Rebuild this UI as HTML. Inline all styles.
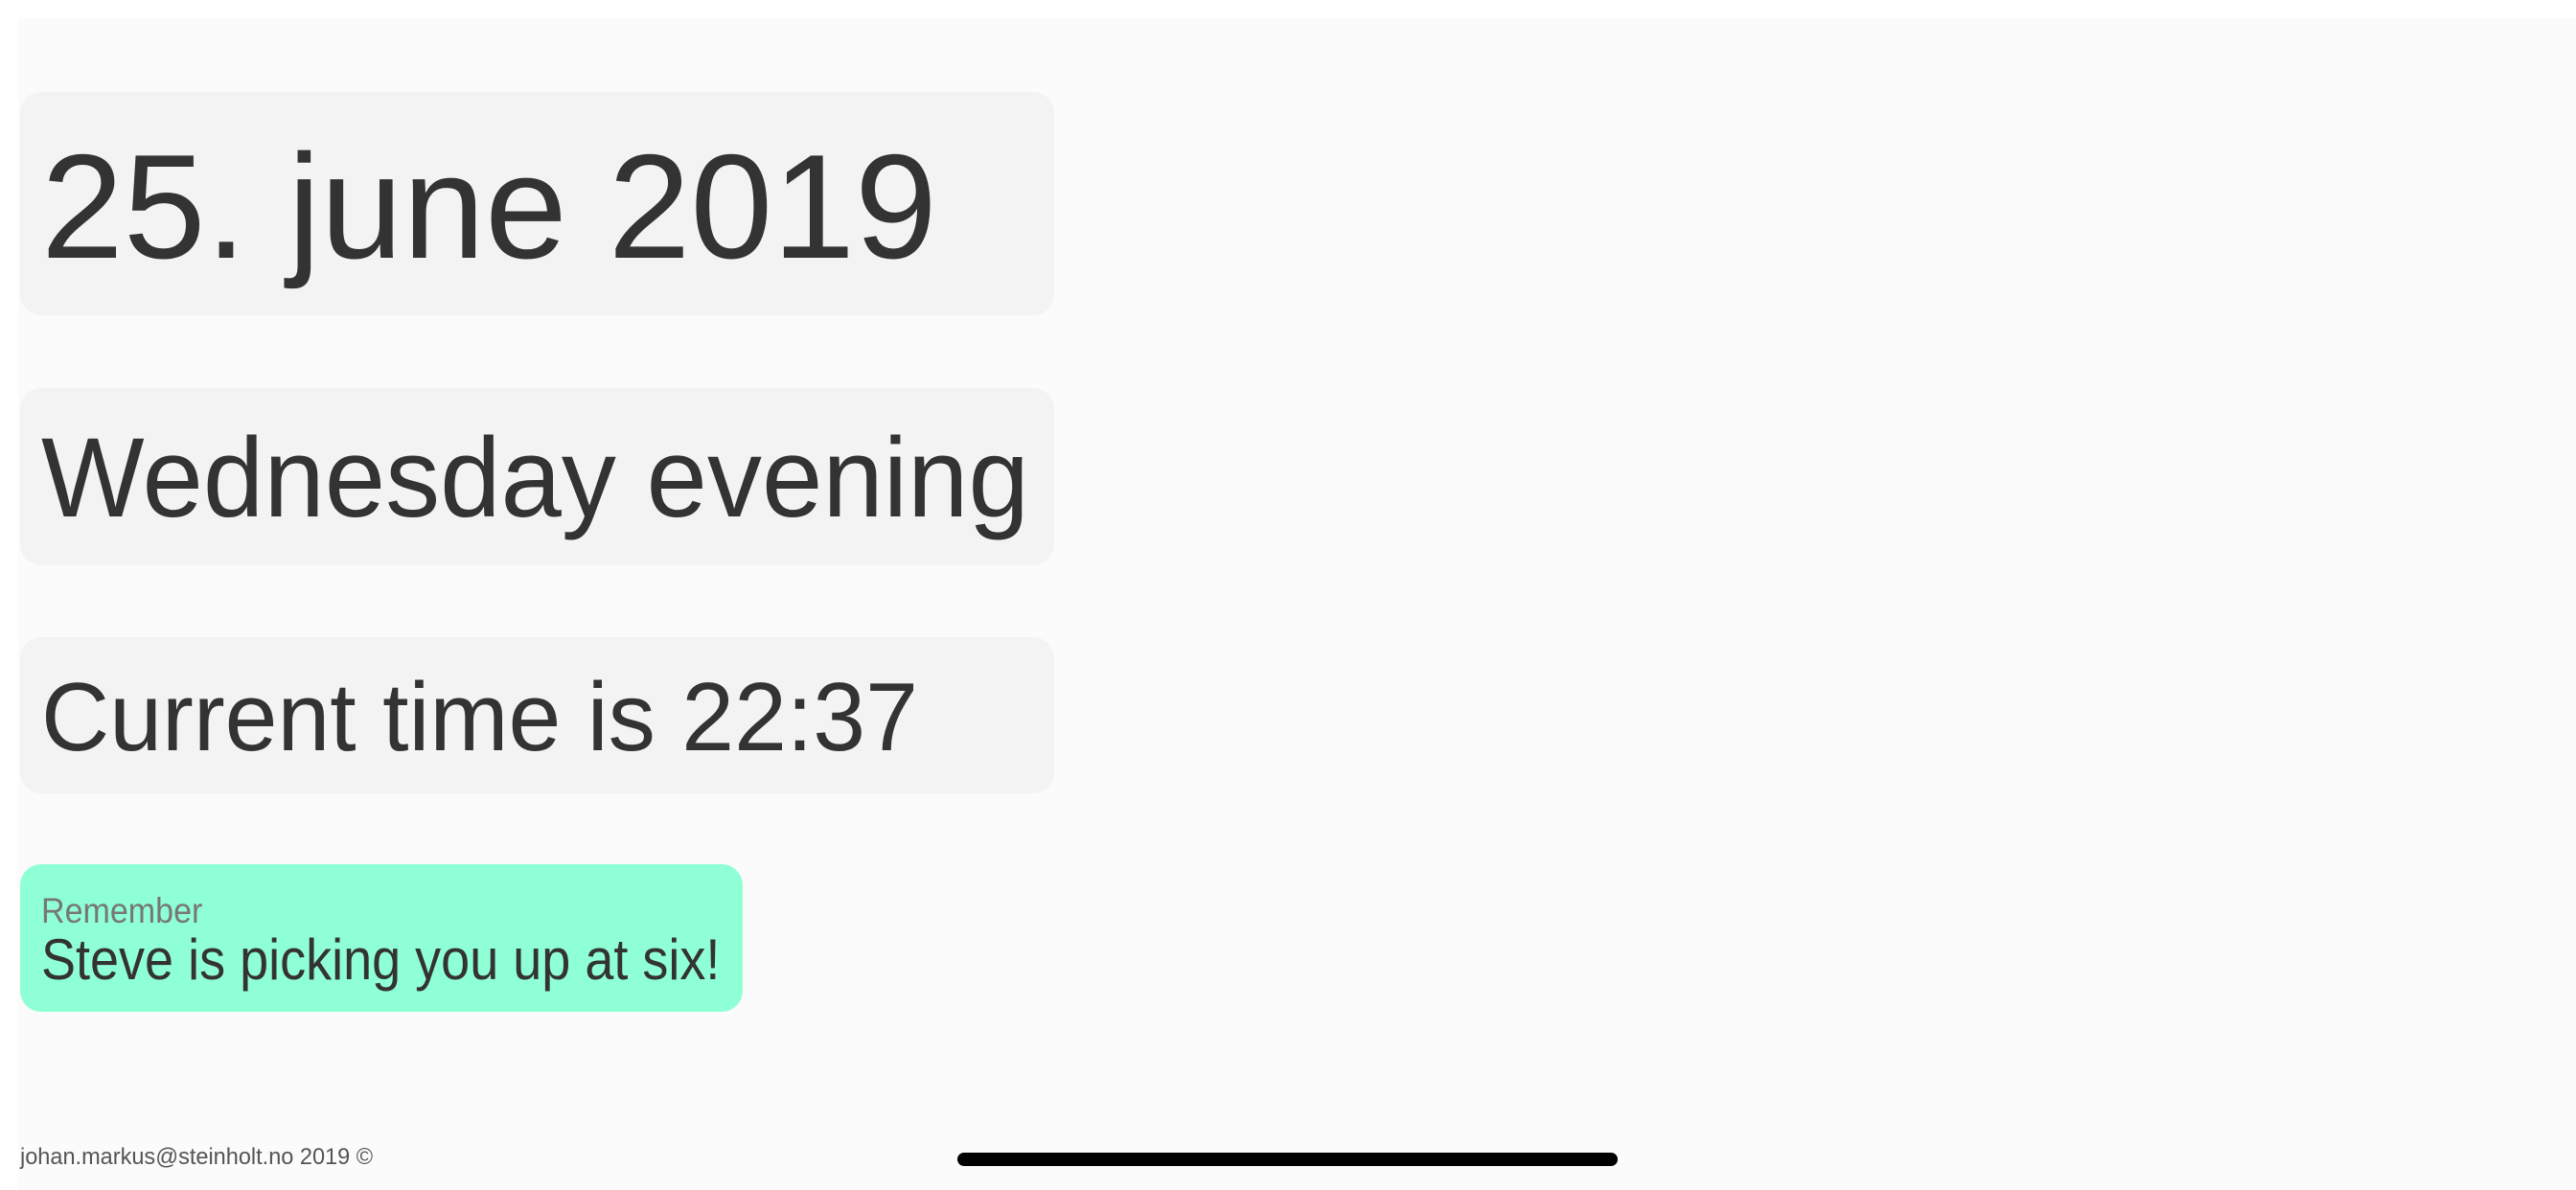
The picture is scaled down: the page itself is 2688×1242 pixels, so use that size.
<!DOCTYPE html>
<html><head><meta charset="utf-8"><style>
html,body{margin:0;padding:0;width:2688px;height:1242px;overflow:hidden;background:#fff;}
.bg{position:absolute;left:19px;top:19px;right:0;bottom:0;background:#fbfbfb;}
.card{position:absolute;left:21px;width:1079px;background:#f3f3f3;border-radius:22px;}
.t{position:absolute;left:43px;white-space:nowrap;font-family:"Liberation Sans",sans-serif;color:#333;transform-origin:0 0;line-height:1;}
</style></head><body>
<div class="bg"></div>
<div class="card" style="top:96px;height:233px"></div>
<div class="t" style="top:138px;font-size:155px;transform:scaleX(0.995)">25. june 2019</div>
<div class="card" style="top:405px;height:185px"></div>
<div class="t" style="top:440px;font-size:118px;transform:scaleX(0.966)">Wednesday evening</div>
<div class="card" style="top:665px;height:163px"></div>
<div class="t" style="top:699px;font-size:101px;transform:scaleX(0.976)">Current time is 22:37</div>
<div class="card" style="top:902px;height:154px;width:754px;background:#8fffd6"></div>
<div class="t" style="top:932px;font-size:37px;color:#777;transform:scaleX(0.92)">Remember</div>
<div class="t" style="top:972px;font-size:60px;color:#333;transform:scaleX(0.9)">Steve is picking you up at six!</div>
<div class="t" style="left:21px;top:1196px;font-size:24px;color:#555;transform:scaleX(0.98)">johan.markus@steinholt.no 2019 ©</div>
<div style="position:absolute;left:999px;top:1203px;width:689px;height:14px;border-radius:7px;background:#000"></div>
</body></html>
